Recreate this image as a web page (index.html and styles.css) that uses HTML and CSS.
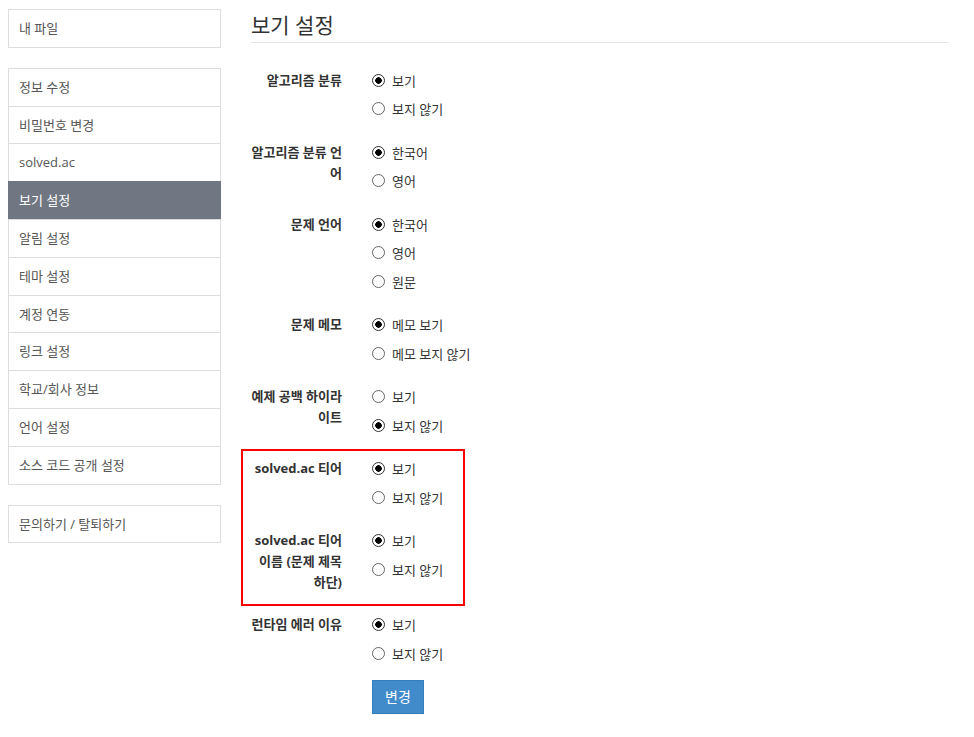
FILE: index.html
```html
<!DOCTYPE html>
<html lang="ko">
<head>
<meta charset="utf-8">
<title>보기 설정</title>
<link rel="stylesheet" href="styles.css">
</head>
<body>
<div class="page">
  <aside class="sidebar">
    <ul class="list-group">
      <li class="list-item">내 파일</li>
    </ul>
    <ul class="list-group">
      <li class="list-item">정보 수정</li>
      <li class="list-item">비밀번호 변경</li>
      <li class="list-item">solved.ac</li>
      <li class="list-item active">보기 설정</li>
      <li class="list-item">알림 설정</li>
      <li class="list-item">테마 설정</li>
      <li class="list-item">계정 연동</li>
      <li class="list-item">링크 설정</li>
      <li class="list-item">학교/회사 정보</li>
      <li class="list-item">언어 설정</li>
      <li class="list-item">소스 코드 공개 설정</li>
    </ul>
    <ul class="list-group">
      <li class="list-item">문의하기 / 탈퇴하기</li>
    </ul>
  </aside>
  <main class="main">
    <h1 class="headline">보기 설정</h1>
    <form class="form">
      <div class="group">
        <div class="label">알고리즘 분류</div>
        <div class="options">
          <label class="radio"><input type="radio" name="a" checked><span>보기</span></label>
          <label class="radio"><input type="radio" name="a"><span>보지 않기</span></label>
        </div>
      </div>
      <div class="group">
        <div class="label">알고리즘 분류 언어</div>
        <div class="options">
          <label class="radio"><input type="radio" name="b" checked><span>한국어</span></label>
          <label class="radio"><input type="radio" name="b"><span>영어</span></label>
        </div>
      </div>
      <div class="group">
        <div class="label">문제 언어</div>
        <div class="options">
          <label class="radio"><input type="radio" name="c" checked><span>한국어</span></label>
          <label class="radio"><input type="radio" name="c"><span>영어</span></label>
          <label class="radio"><input type="radio" name="c"><span>원문</span></label>
        </div>
      </div>
      <div class="group">
        <div class="label">문제 메모</div>
        <div class="options">
          <label class="radio"><input type="radio" name="d" checked><span>메모 보기</span></label>
          <label class="radio"><input type="radio" name="d"><span>메모 보지 않기</span></label>
        </div>
      </div>
      <div class="group">
        <div class="label">예제 공백 하이라이트</div>
        <div class="options">
          <label class="radio"><input type="radio" name="e"><span>보기</span></label>
          <label class="radio"><input type="radio" name="e" checked><span>보지 않기</span></label>
        </div>
      </div>
      <div class="highlight">
        <div class="group">
          <div class="label">solved.ac 티어</div>
          <div class="options">
            <label class="radio"><input type="radio" name="f" checked><span>보기</span></label>
            <label class="radio"><input type="radio" name="f"><span>보지 않기</span></label>
          </div>
        </div>
        <div class="group">
          <div class="label">solved.ac 티어 이름 (문제 제목 하단)</div>
          <div class="options">
            <label class="radio"><input type="radio" name="g" checked><span>보기</span></label>
            <label class="radio"><input type="radio" name="g"><span>보지 않기</span></label>
          </div>
        </div>
      </div>
      <div class="group last">
        <div class="label">런타임 에러 이유</div>
        <div class="options">
          <label class="radio"><input type="radio" name="h" checked><span>보기</span></label>
          <label class="radio"><input type="radio" name="h"><span>보지 않기</span></label>
        </div>
      </div>
      <div class="actions">
        <button type="button" class="btn">변경</button>
      </div>
    </form>
  </main>
</div>
</body>
</html>
```

FILE: styles.css
```css
html, body {
  margin: 0;
  padding: 0;
  background: #fff;
}

body {
  font-family: "Open Sans", "Noto Sans CJK KR", sans-serif;
  font-size: 13px;
  color: #333;
  font-feature-settings: "palt";
}

.page {
  display: flex;
  align-items: flex-start;
  padding: 9px 0 0 8px;
  gap: 30px;
}

.sidebar {
  width: 213px;
  flex: none;
}

.list-group {
  list-style: none;
  margin: 0 0 20px;
  padding: 0;
}

.list-item {
  display: block;
  padding: 9px 10px;
  line-height: 18.8px;
  border: 1px solid #ddd;
  margin-bottom: -1px;
  color: #555;
  background: #fff;
}

.list-item:last-child {
  margin-bottom: 0;
}

.list-item.active {
  background: #707782;
  border-color: #707782;
  color: #fff;
}

.main {
  width: 697px;
  flex: none;
}

.headline {
  margin: 0;
  font-size: 21px;
  font-weight: normal;
  line-height: 32px;
  padding-bottom: 1px;
  border-bottom: 1px solid #e5e5e5;
  color: #333;
}

.form {
  padding-top: 22.5px;
}

.group {
  display: flex;
  align-items: flex-start;
  margin-bottom: 14px;
}

.group.last {
  margin-bottom: 11.5px;
}

.label {
  width: 91px;
  flex: none;
  text-align: right;
  font-weight: bold;
  line-height: 21px;
  padding: 4px 0 3px;
  color: #333;
}

.options {
  margin-left: 30px;
  padding: 0.5px 0;
}

.radio {
  display: flex;
  align-items: center;
  height: 28.5px;
  color: #333;
}

.radio input {
  appearance: none;
  -webkit-appearance: none;
  margin: 0 7px 0 0;
  width: 13px;
  height: 13px;
  border: 1px solid #666;
  border-radius: 50%;
  background: #fff;
  flex: none;
}

.radio input:checked {
  border-color: #333;
  background: radial-gradient(circle, #000 0, #000 3px, #fff 3.5px);
}

.highlight {
  position: relative;
}

.highlight::after {
  content: "";
  position: absolute;
  top: -5.5px;
  bottom: -10px;
  left: -10px;
  width: 224px;
  border: 2px solid #f00;
  box-sizing: border-box;
  pointer-events: none;
}

.actions {
  padding-left: 121px;
}

.btn {
  font-family: inherit;
  font-feature-settings: inherit;
  font-size: 14px;
  line-height: 20px;
  padding: 6px 12px;
  color: #fff;
  background: #428bca;
  border: 1px solid #357ebd;
  border-radius: 0;
  cursor: pointer;
}
```
